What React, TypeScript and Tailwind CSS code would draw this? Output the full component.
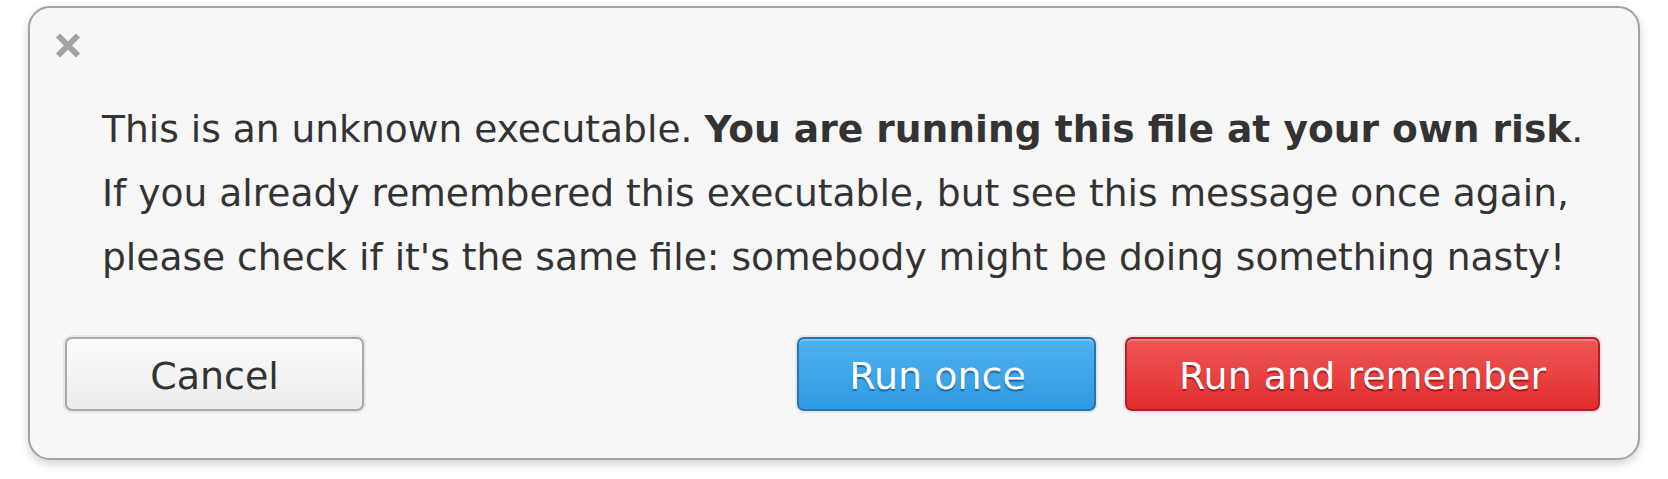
import React from "react";

export default function App() {
  return (
    <div
      className="w-[1668px] h-[479px] bg-white pt-[6px] pl-[28px]"
      style={{ fontFamily: '"DejaVu Sans", "Noto Sans", sans-serif' }}
    >
      <div className="w-[1612px] h-[454px] rounded-[22px] border-2 border-[#a2a2a2] bg-[#f7f7f7] shadow-[0_4px_10px_rgba(0,0,0,0.18)] flex flex-col">
        <div className="pl-[25px] pt-[25px] h-[49px]">
          <svg width="26" height="25" viewBox="0 0 26 25" className="block">
            <path d="M3 2.5 L23 22.5 M23 2.5 L3 22.5" stroke="#a3a3a3" strokeWidth="6" strokeLinecap="butt" />
          </svg>
        </div>
        <div className="pl-[72px] mt-[40px] text-[37.6px] leading-[64px] text-[#333333]">
          <div className="whitespace-nowrap">
            This is an unknown executable. <b className="font-bold">You are running this file at your own risk</b>.
          </div>
          <div className="whitespace-nowrap">
            If you already remembered this executable, but see this message once again,
          </div>
          <div className="whitespace-nowrap">
            please check if it's the same file: somebody might be doing something nasty!
          </div>
        </div>
        <div className="mt-[48px] pl-[35px] pr-[38px] flex items-start">
          <button className="w-[299px] h-[74px] pt-[4px] rounded-[7px] border-2 border-[#a9a9a9] bg-gradient-to-b from-[#fafafa] to-[#ececec] shadow-[0_0_0_2px_#e6e6e6] text-[38px] text-[#333333] flex items-center justify-center">
            Cancel
          </button>
          <div className="flex-1" />
          <button className="w-[299px] h-[74px] pt-[4px] pr-[18px] rounded-[7px] border-2 border-[#2277b6] bg-gradient-to-b from-[#50b1ee] to-[#2c9be3] shadow-[inset_0_2px_0_rgba(255,255,255,0.25),0_0_0_2px_#e6e6e6] text-[38px] text-white [text-shadow:0_2px_1px_rgba(0,60,120,0.6)] flex items-center justify-center">
            Run once
          </button>
          <button className="ml-[29px] w-[475px] h-[74px] pt-[4px] rounded-[7px] border-2 border-[#b51f28] bg-gradient-to-b from-[#ef5656] to-[#e12b2c] shadow-[inset_0_2px_0_rgba(255,255,255,0.25),0_0_0_2px_#e6e6e6] text-[38px] text-white [text-shadow:0_2px_1px_rgba(120,0,0,0.6)] flex items-center justify-center">
            Run and remember
          </button>
        </div>
      </div>
    </div>
  );
}
